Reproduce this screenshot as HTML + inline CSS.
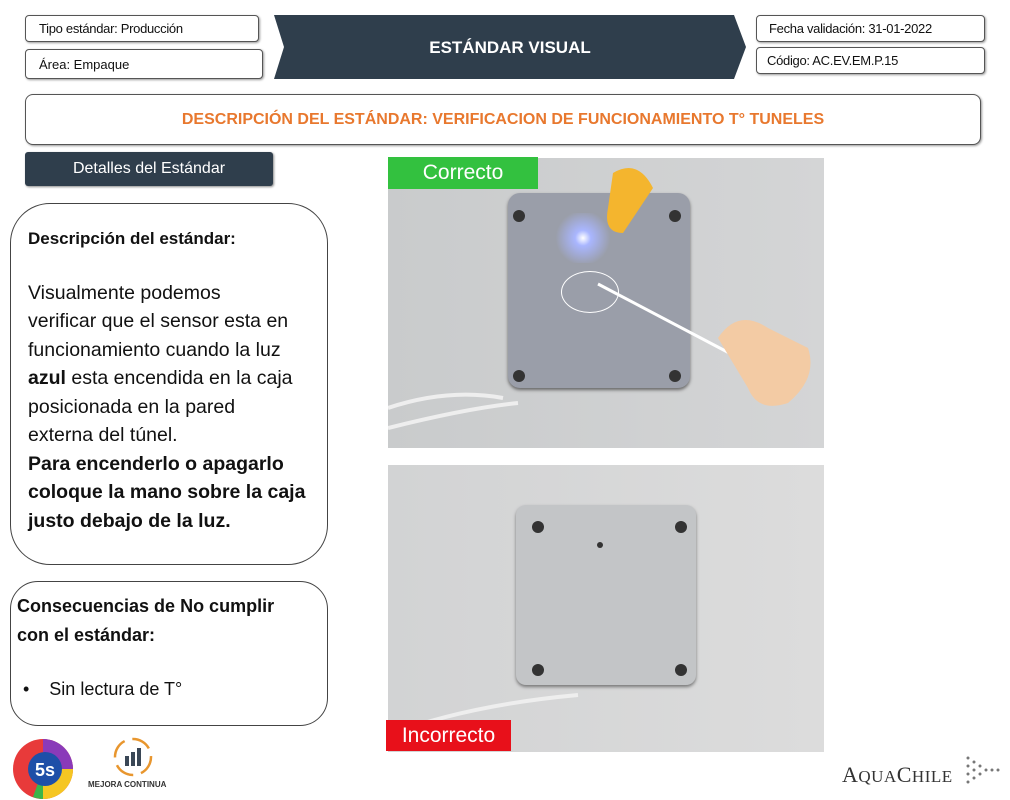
<!DOCTYPE html>
<html><head><meta charset="utf-8"><style>
*{margin:0;padding:0;box-sizing:border-box}
body{width:1010px;height:800px;background:#fff;position:relative;overflow:hidden;font-family:"Liberation Sans",sans-serif;color:#111}
.a{position:absolute}
.bx{position:absolute;border:1px solid #555;border-radius:4px;background:#fff;font-size:13px;padding-left:13px;display:flex;align-items:center;box-shadow:1px 1px 2px #999}
</style></head><body>
<div class="bx" style="left:25px;top:15px;width:234px;height:27px;letter-spacing:-0.3px">Tipo estándar: Producción</div>
<div class="bx" style="left:25px;top:49px;width:238px;height:30px">Área: Empaque</div>
<svg class="a" style="left:274px;top:15px" width="472" height="64"><polygon points="0,0 460,0 472,32 460,64 0,64 10,32" fill="#2f3e4c"/></svg>
<div class="a" style="left:274px;top:38px;width:472px;text-align:center;color:#fff;font-weight:bold;font-size:17px">ESTÁNDAR VISUAL</div>
<div class="bx" style="left:756px;top:15px;width:229px;height:27px;padding-left:12px;letter-spacing:-0.3px">Fecha validación: 31-01-2022</div>
<div class="bx" style="left:756px;top:47px;width:229px;height:27px;padding-left:10px;letter-spacing:-0.3px">Código: AC.EV.EM.P.15</div>
<div class="bx" style="left:25px;top:94px;width:956px;height:51px;border-radius:8px;justify-content:center;padding:0;color:#e8782e;font-weight:bold;font-size:16px">DESCRIPCIÓN DEL ESTÁNDAR: VERIFICACION DE FUNCIONAMIENTO T° TUNELES</div>
<div class="a" style="left:25px;top:152px;width:248px;height:34px;background:#2f3e4c;border-radius:3px;color:#fff;font-size:16px;text-align:center;line-height:34px;box-shadow:1px 1px 2px #888">Detalles del Estándar</div>
<div class="a" style="left:10px;top:203px;width:318px;height:362px;border:1px solid #444;border-radius:40px;padding:21px 0 0 17px;font-size:19.5px;line-height:28.5px;white-space:nowrap">
<div style="font-weight:bold;font-size:17px">Descripción del estándar:</div>
<div style="margin-top:25px">Visualmente podemos<br>verificar que el sensor esta en<br>funcionamiento cuando la luz<br><b>azul</b> esta encendida en la caja<br>posicionada en la pared<br>externa del túnel.<br><b>Para encenderlo o apagarlo<br>coloque la mano sobre la caja<br>justo debajo de la luz.</b></div></div>
<div class="a" style="left:10px;top:581px;width:318px;height:145px;border:1px solid #444;border-radius:28px;padding:10px 0 0 6px;font-size:18px;line-height:29px;white-space:nowrap">
<b>Consecuencias de No cumplir<br>con el estándar:</b>
<div style="margin-top:25px;margin-left:6px">•&nbsp;&nbsp;&nbsp;&nbsp;Sin lectura de T°</div></div>
<!-- photo 1 -->
<div class="a" style="left:388px;top:158px;width:436px;height:290px;background:linear-gradient(90deg,#c9cbcc,#d4d5d6);overflow:hidden">
<div class="a" style="left:120px;top:35px;width:182px;height:195px;background:#9a9ea9;border-radius:12px;box-shadow:0 2px 3px #666"></div>
<div class="a" style="left:165px;top:55px;width:60px;height:50px;background:radial-gradient(circle,#fff 0,#a9b6ff 20%,rgba(154,158,200,0) 70%)"></div>
<div class="a" style="left:173px;top:113px;width:58px;height:42px;border:1.5px solid #fff;border-radius:50%"></div>
<svg class="a" style="left:0;top:0" width="436" height="290"><line x1="210" y1="126" x2="385" y2="218" stroke="#fff" stroke-width="3"/>
<circle cx="131" cy="58" r="6" fill="#333"/><circle cx="287" cy="58" r="6" fill="#333"/><circle cx="131" cy="218" r="6" fill="#333"/><circle cx="287" cy="218" r="6" fill="#333"/>
<path d="M0 250 Q60 230 115 240 M0 270 Q80 250 130 245" stroke="#eee" stroke-width="4" fill="none"/>
<path d="M225 15 q25 -15 40 15 l-30 45 q-20 0 -15 -25z" fill="#f4b52e"/>
<path d="M330 180 q20 -30 50 -10 l40 20 q10 30 -20 55 q-30 10 -40 -15z" fill="#f3cba4"/></svg></div>
<div class="a" style="left:388px;top:157px;width:150px;height:32px;background:#33c13f;color:#fff;font-size:21px;text-align:center;line-height:32px">Correcto</div>
<!-- photo 2 -->
<div class="a" style="left:388px;top:465px;width:436px;height:287px;background:linear-gradient(90deg,#d2d3d4,#dcdcdc);overflow:hidden">
<div class="a" style="left:128px;top:40px;width:180px;height:180px;background:#c3c5c7;border-radius:10px;box-shadow:0 2px 3px #777"></div>
<svg class="a" style="left:0;top:0" width="436" height="287"><circle cx="150" cy="62" r="6" fill="#333"/><circle cx="293" cy="62" r="6" fill="#333"/><circle cx="150" cy="205" r="6" fill="#333"/><circle cx="293" cy="205" r="6" fill="#333"/><circle cx="212" cy="80" r="3" fill="#333"/>
<path d="M0 270 Q80 240 190 230" stroke="#eee" stroke-width="4" fill="none"/></svg></div>
<div class="a" style="left:386px;top:720px;width:125px;height:31px;background:#e8101a;color:#fff;font-size:21px;text-align:center;line-height:31px">Incorrecto</div>
<!-- logos -->
<svg class="a" style="left:8px;top:737px" width="70" height="63"><circle cx="35" cy="32" r="30" fill="#e83a3a"/><path d="M35 2 a30 30 0 0 1 30 30 l-30 0z" fill="#8a3ab9"/><path d="M65 32 a30 30 0 0 1 -30 30 l0 -30z" fill="#f5c622"/><path d="M35 62 a30 30 0 0 1 -10 -2 l10 -28z" fill="#3bb54a"/><circle cx="37" cy="32" r="17" fill="#1e4fa8"/><text x="37" y="39" font-size="18" fill="#fff" font-weight="bold" text-anchor="middle" font-family="Liberation Sans">5s</text></svg>
<svg class="a" style="left:108px;top:734px" width="50" height="46"><circle cx="25" cy="23" r="18" fill="none" stroke="#e8962e" stroke-width="2.5" stroke-dasharray="20 8"/><rect x="17" y="22" width="4" height="10" fill="#3a4756"/><rect x="23" y="18" width="4" height="14" fill="#3a4756"/><rect x="29" y="14" width="4" height="18" fill="#3a4756"/></svg>
<div class="a" style="left:88px;top:780px;font-size:8px;font-weight:bold;color:#333">MEJORA CONTINUA</div>
<div class="a" style="left:842px;top:762px;font-family:'Liberation Serif',serif;font-size:22px;color:#333;letter-spacing:0.5px">A<span style="font-size:17px">QUA</span>C<span style="font-size:17px">HILE</span></div>
<svg class="a" style="left:962px;top:752px" width="40" height="40"><g fill="#777"><circle cx="6" cy="6" r="1.5"/><circle cx="6" cy="14" r="1.5"/><circle cx="6" cy="22" r="1.5"/><circle cx="6" cy="30" r="1.5"/><circle cx="12" cy="10" r="1.5"/><circle cx="12" cy="18" r="1.5"/><circle cx="12" cy="26" r="1.5"/><circle cx="18" cy="14" r="1.5"/><circle cx="18" cy="22" r="1.5"/><circle cx="24" cy="18" r="1.5"/><circle cx="30" cy="18" r="1.5"/><circle cx="36" cy="18" r="1.5"/></g></svg>
</body></html>
